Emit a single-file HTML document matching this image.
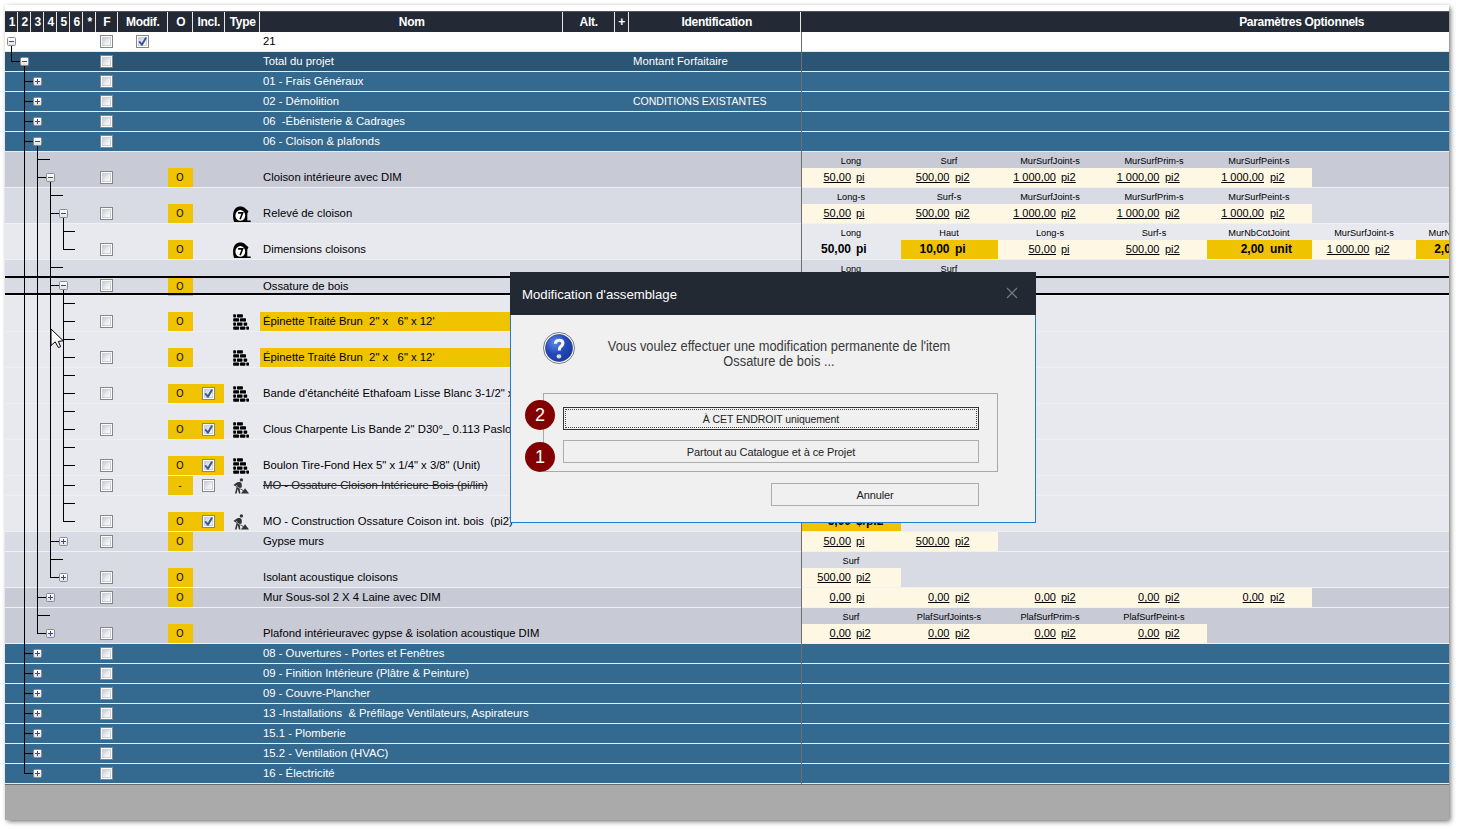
<!DOCTYPE html>
<html><head><meta charset="utf-8"><style>
html,body{margin:0;padding:0;}
body{width:1458px;height:829px;overflow:hidden;position:relative;background:#fff;font-family:"Liberation Sans", sans-serif;}
body div{position:absolute;}
#dlg div{position:absolute;}
.t{white-space:pre;line-height:13px;}
.v{font-size:11px;color:#000;}
.vb{font-size:12px;font-weight:bold;color:#000;}
.lb{font-size:9.2px;color:#000;}
u{text-decoration:underline;text-underline-offset:1px;}
.cb{width:11px;height:11px;border:1px solid #868686;background:#fff;}
.cb::before{content:"";position:absolute;left:1px;top:1px;width:7px;height:7px;border:1px solid #cdd0d7;background:linear-gradient(135deg,#c8ccd5,#eceef1 60%,#f8f8f8);}
.btn{border:1px solid #adadad;background:#f0f0f0;}
.bt{left:0;top:5px;width:100%;text-align:center;font-size:11px;color:#222;letter-spacing:-0.1px;}
.circ{width:30px;height:30px;border-radius:50%;background:#820000;color:#fff;font-size:18px;line-height:30px;text-align:center;}
.eb{width:7px;height:7px;border:1px solid #8c8c8c;border-radius:1.5px;background:linear-gradient(#fff,#e2e2e2);}
.eb .h{left:1px;top:3px;width:5px;height:1px;background:#3548a6;}
.eb .v{left:3px;top:1px;width:1px;height:5px;background:#3548a6;}
</style></head>
<body>
<div id="panel" style="left:5px;top:5px;width:1444px;height:815px;background:#fff;box-shadow:1.5px 1.5px 5px rgba(0,0,0,.55),0 0 3px rgba(0,0,0,.08);"></div>
<div id="clip" style="left:0;top:0;width:1449px;height:820px;overflow:hidden;">
<div style="left:5px;top:11px;width:1444px;height:21px;background:#232a35;box-shadow:inset 0 1px 0 #50555c;"></div><div style="left:17px;top:12px;width:1px;height:20px;background:#e6e6e6;"></div><div style="left:30px;top:12px;width:1px;height:20px;background:#e6e6e6;"></div><div style="left:43px;top:12px;width:1px;height:20px;background:#e6e6e6;"></div><div style="left:56px;top:12px;width:1px;height:20px;background:#e6e6e6;"></div><div style="left:69px;top:12px;width:1px;height:20px;background:#e6e6e6;"></div><div style="left:82px;top:12px;width:1px;height:20px;background:#e6e6e6;"></div><div style="left:95px;top:12px;width:1px;height:20px;background:#e6e6e6;"></div><div style="left:117px;top:12px;width:1px;height:20px;background:#e6e6e6;"></div><div style="left:167px;top:12px;width:1px;height:20px;background:#e6e6e6;"></div><div style="left:192px;top:12px;width:1px;height:20px;background:#e6e6e6;"></div><div style="left:224px;top:12px;width:1px;height:20px;background:#e6e6e6;"></div><div style="left:259px;top:12px;width:1px;height:20px;background:#e6e6e6;"></div><div style="left:562px;top:12px;width:1px;height:20px;background:#e6e6e6;"></div><div style="left:614px;top:12px;width:1px;height:20px;background:#e6e6e6;"></div><div style="left:628px;top:12px;width:1px;height:20px;background:#e6e6e6;"></div><div style="left:800px;top:12px;width:1px;height:20px;background:#e6e6e6;"></div><div class="t" style="left:-288px;width:600px;text-align:center;top:16px;font-size:12px;color:#fff;font-weight:bold;letter-spacing:-0.3px;">1</div><div class="t" style="left:-275.3px;width:600px;text-align:center;top:16px;font-size:12px;color:#fff;font-weight:bold;letter-spacing:-0.3px;">2</div><div class="t" style="left:-262.3px;width:600px;text-align:center;top:16px;font-size:12px;color:#fff;font-weight:bold;letter-spacing:-0.3px;">3</div><div class="t" style="left:-249.3px;width:600px;text-align:center;top:16px;font-size:12px;color:#fff;font-weight:bold;letter-spacing:-0.3px;">4</div><div class="t" style="left:-236.3px;width:600px;text-align:center;top:16px;font-size:12px;color:#fff;font-weight:bold;letter-spacing:-0.3px;">5</div><div class="t" style="left:-223.3px;width:600px;text-align:center;top:16px;font-size:12px;color:#fff;font-weight:bold;letter-spacing:-0.3px;">6</div><div class="t" style="left:-210.3px;width:600px;text-align:center;top:16px;font-size:12px;color:#fff;font-weight:bold;letter-spacing:-0.3px;">*</div><div class="t" style="left:-193.3px;width:600px;text-align:center;top:16px;font-size:12px;color:#fff;font-weight:bold;letter-spacing:-0.3px;">F</div><div class="t" style="left:-157.3px;width:600px;text-align:center;top:16px;font-size:12px;color:#fff;font-weight:bold;letter-spacing:-0.3px;">Modif.</div><div class="t" style="left:-119.30000000000001px;width:600px;text-align:center;top:16px;font-size:12px;color:#fff;font-weight:bold;letter-spacing:-0.3px;">O</div><div class="t" style="left:-91.30000000000001px;width:600px;text-align:center;top:16px;font-size:12px;color:#fff;font-weight:bold;letter-spacing:-0.3px;">Incl.</div><div class="t" style="left:-57.30000000000001px;width:600px;text-align:center;top:16px;font-size:12px;color:#fff;font-weight:bold;letter-spacing:-0.3px;">Type</div><div class="t" style="left:111.69999999999999px;width:600px;text-align:center;top:16px;font-size:12px;color:#fff;font-weight:bold;letter-spacing:-0.3px;">Nom</div><div class="t" style="left:288.70000000000005px;width:600px;text-align:center;top:16px;font-size:12px;color:#fff;font-weight:bold;letter-spacing:-0.3px;">Alt.</div><div class="t" style="left:321.70000000000005px;width:600px;text-align:center;top:16px;font-size:12px;color:#fff;font-weight:bold;letter-spacing:-0.3px;">+</div><div class="t" style="left:416.70000000000005px;width:600px;text-align:center;top:16px;font-size:12px;color:#fff;font-weight:bold;letter-spacing:-0.3px;">Identification</div><div class="t" style="left:1001.7px;width:600px;text-align:center;top:16px;font-size:12px;color:#fff;font-weight:bold;letter-spacing:-0.3px;">Paramètres Optionnels</div><div style="left:5px;top:32px;width:1444px;height:19px;background:#ffffff;"></div><div style="left:5px;top:51px;width:1444px;height:1px;background:#e9e9e9;"></div><div class="cb" style="left:100px;top:35px;"></div><div class="cb" style="left:136px;top:35px;"><svg width="11" height="11" style="position:absolute;left:0;top:0" viewBox="0 0 11 11"><path d="M2.8 6.1 L4.9 8.7 L8.7 2.2" fill="none" stroke="#3a53a0" stroke-width="2" stroke-linecap="round" stroke-linejoin="round"/></svg></div><div class="t" style="left:263px;top:35px;font-size:11.3px;color:#000;font-weight:normal;">21</div><div style="left:5px;top:52px;width:1444px;height:19px;background:#2a5574;"></div><div style="left:5px;top:71px;width:1444px;height:1px;background:#e9ecef;"></div><div class="cb" style="left:100px;top:55px;"></div><div class="t" style="left:263px;top:55px;font-size:11.3px;color:#fff;font-weight:normal;">Total du projet</div><div class="t" style="left:633px;top:55px;font-size:11.3px;color:#fff;font-weight:normal;">Montant Forfaitaire</div><div style="left:5px;top:72px;width:1444px;height:19px;background:#356a90;"></div><div style="left:5px;top:91px;width:1444px;height:1px;background:#e9ecef;"></div><div class="cb" style="left:100px;top:75px;"></div><div class="t" style="left:263px;top:75px;font-size:11.3px;color:#fff;font-weight:normal;">01 - Frais Généraux</div><div style="left:5px;top:92px;width:1444px;height:19px;background:#356a90;"></div><div style="left:5px;top:111px;width:1444px;height:1px;background:#e9ecef;"></div><div class="cb" style="left:100px;top:95px;"></div><div class="t" style="left:263px;top:95px;font-size:11.3px;color:#fff;font-weight:normal;">02 - Démolition</div><div class="t" style="left:633px;top:95px;font-size:10.5px;color:#fff;font-weight:normal;">CONDITIONS EXISTANTES</div><div style="left:5px;top:112px;width:1444px;height:19px;background:#356a90;"></div><div style="left:5px;top:131px;width:1444px;height:1px;background:#e9ecef;"></div><div class="cb" style="left:100px;top:115px;"></div><div class="t" style="left:263px;top:115px;font-size:11.3px;color:#fff;font-weight:normal;">06  -Ébénisterie &amp; Cadrages</div><div style="left:5px;top:132px;width:1444px;height:19px;background:#356a90;"></div><div style="left:5px;top:151px;width:1444px;height:1px;background:#e9ecef;"></div><div class="cb" style="left:100px;top:135px;"></div><div class="t" style="left:263px;top:135px;font-size:11.3px;color:#fff;font-weight:normal;">06 - Cloison &amp; plafonds</div><div style="left:5px;top:152px;width:1444px;height:35px;background:#c8cad6;"></div><div style="left:5px;top:187px;width:1444px;height:1px;background:#f0f1f4;"></div><div class="cb" style="left:100px;top:171px;"></div><div style="left:168px;top:168px;width:25px;height:19px;background:#f0c300;"></div><div class="t" style="left:-120.5px;width:600px;text-align:center;top:171px;font-size:11px;color:#000;font-weight:normal;transform:scaleX(0.85);">O</div><div class="t" style="left:263px;top:171px;font-size:11.3px;color:#000;font-weight:normal;">Cloison intérieure avec DIM</div><div style="left:5px;top:188px;width:1444px;height:35px;background:#d8dbe4;"></div><div style="left:5px;top:223px;width:1444px;height:1px;background:#f0f1f4;"></div><div class="cb" style="left:100px;top:207px;"></div><div style="left:168px;top:204px;width:25px;height:19px;background:#f0c300;"></div><div class="t" style="left:-120.5px;width:600px;text-align:center;top:207px;font-size:11px;color:#000;font-weight:normal;transform:scaleX(0.85);">O</div><div class="ic tape" style="left:233px;top:206px;"><svg width="18" height="16" viewBox="0 0 18 16"><path d="M1.2 15.9 C-0.5 12.5 -0.5 5 2.6 2.2 C4.6 0.3 9.4 -0.4 12.4 2.4 L15.5 5.3 L14.3 7.4 L14.3 14.4 L17.7 14.4 L17.7 15.9 Z" fill="#000"/><ellipse cx="7.3" cy="9.4" rx="4.9" ry="5.3" fill="#fff"/><path d="M5.1 6.9 L9.6 6.9 L7.1 13.3" stroke="#000" stroke-width="1.6" fill="none"/></svg></div><div class="t" style="left:263px;top:207px;font-size:11.3px;color:#000;font-weight:normal;">Relevé de cloison</div><div style="left:5px;top:224px;width:1444px;height:35px;background:#e8e9ef;"></div><div style="left:5px;top:259px;width:1444px;height:1px;background:#eeeff3;"></div><div class="cb" style="left:100px;top:243px;"></div><div style="left:168px;top:240px;width:25px;height:19px;background:#f0c300;"></div><div class="t" style="left:-120.5px;width:600px;text-align:center;top:243px;font-size:11px;color:#000;font-weight:normal;transform:scaleX(0.85);">O</div><div class="ic tape" style="left:233px;top:242px;"><svg width="18" height="16" viewBox="0 0 18 16"><path d="M1.2 15.9 C-0.5 12.5 -0.5 5 2.6 2.2 C4.6 0.3 9.4 -0.4 12.4 2.4 L15.5 5.3 L14.3 7.4 L14.3 14.4 L17.7 14.4 L17.7 15.9 Z" fill="#000"/><ellipse cx="7.3" cy="9.4" rx="4.9" ry="5.3" fill="#fff"/><path d="M5.1 6.9 L9.6 6.9 L7.1 13.3" stroke="#000" stroke-width="1.6" fill="none"/></svg></div><div class="t" style="left:263px;top:243px;font-size:11.3px;color:#000;font-weight:normal;">Dimensions cloisons</div><div style="left:5px;top:260px;width:1444px;height:35px;background:#d8dbe4;"></div><div style="left:5px;top:295px;width:1444px;height:1px;background:#f0f1f4;"></div><div class="cb" style="left:100px;top:279px;"></div><div style="left:168px;top:278px;width:25px;height:18px;background:#f0c300;"></div><div class="t" style="left:-120.5px;width:600px;text-align:center;top:280px;font-size:11px;color:#000;font-weight:normal;transform:scaleX(0.85);">O</div><div class="t" style="left:263px;top:280px;font-size:11.3px;color:#000;font-weight:normal;">Ossature de bois</div><div style="left:5px;top:296px;width:1444px;height:35px;background:#e8e9ef;"></div><div style="left:5px;top:331px;width:1444px;height:1px;background:#eeeff3;"></div><div class="cb" style="left:100px;top:315px;"></div><div style="left:168px;top:312px;width:25px;height:19px;background:#f0c300;"></div><div class="t" style="left:-120.5px;width:600px;text-align:center;top:315px;font-size:11px;color:#000;font-weight:normal;transform:scaleX(0.85);">O</div><div style="left:260px;top:312px;width:302px;height:19px;background:#f0c300;"></div><div class="ic brick" style="left:233px;top:314px;"><svg width="16" height="16" viewBox="0 0 16 16"><g fill="#000"><rect x="0.2" y="0.2" width="2.8" height="3.3" rx="0.7"/><rect x="3.9" y="0.2" width="6" height="3.3" rx="0.7"/><rect x="0.2" y="4.3" width="5.9" height="3.3" rx="0.7"/><rect x="7" y="4.3" width="6" height="3.3" rx="0.7"/><rect x="0.2" y="8.4" width="2.8" height="3.3" rx="0.7"/><rect x="3.9" y="8.4" width="5.6" height="3.3" rx="0.7"/><rect x="10.6" y="8.4" width="3.6" height="3.3" rx="0.7"/><rect x="0.2" y="12.5" width="5.9" height="3.3" rx="0.7"/><rect x="7" y="12.5" width="5.4" height="3.3" rx="0.7"/><rect x="13.3" y="12.5" width="2.7" height="3.3" rx="0.7"/></g></svg></div><div class="t" style="left:263px;top:315px;font-size:11.3px;color:#000;font-weight:normal;">Épinette Traité Brun  2&quot; x   6&quot; x 12&#x27;</div><div style="left:5px;top:332px;width:1444px;height:35px;background:#e8e9ef;"></div><div style="left:5px;top:367px;width:1444px;height:1px;background:#eeeff3;"></div><div class="cb" style="left:100px;top:351px;"></div><div style="left:168px;top:348px;width:25px;height:19px;background:#f0c300;"></div><div class="t" style="left:-120.5px;width:600px;text-align:center;top:351px;font-size:11px;color:#000;font-weight:normal;transform:scaleX(0.85);">O</div><div style="left:260px;top:348px;width:302px;height:19px;background:#f0c300;"></div><div class="ic brick" style="left:233px;top:350px;"><svg width="16" height="16" viewBox="0 0 16 16"><g fill="#000"><rect x="0.2" y="0.2" width="2.8" height="3.3" rx="0.7"/><rect x="3.9" y="0.2" width="6" height="3.3" rx="0.7"/><rect x="0.2" y="4.3" width="5.9" height="3.3" rx="0.7"/><rect x="7" y="4.3" width="6" height="3.3" rx="0.7"/><rect x="0.2" y="8.4" width="2.8" height="3.3" rx="0.7"/><rect x="3.9" y="8.4" width="5.6" height="3.3" rx="0.7"/><rect x="10.6" y="8.4" width="3.6" height="3.3" rx="0.7"/><rect x="0.2" y="12.5" width="5.9" height="3.3" rx="0.7"/><rect x="7" y="12.5" width="5.4" height="3.3" rx="0.7"/><rect x="13.3" y="12.5" width="2.7" height="3.3" rx="0.7"/></g></svg></div><div class="t" style="left:263px;top:351px;font-size:11.3px;color:#000;font-weight:normal;">Épinette Traité Brun  2&quot; x   6&quot; x 12&#x27;</div><div style="left:5px;top:368px;width:1444px;height:35px;background:#e8e9ef;"></div><div style="left:5px;top:403px;width:1444px;height:1px;background:#eeeff3;"></div><div class="cb" style="left:100px;top:387px;"></div><div style="left:168px;top:384px;width:56px;height:19px;background:#f0c300;"></div><div class="t" style="left:-120.5px;width:600px;text-align:center;top:387px;font-size:11px;color:#000;font-weight:normal;transform:scaleX(0.85);">O</div><div class="cb" style="left:202px;top:387px;"><svg width="11" height="11" style="position:absolute;left:0;top:0" viewBox="0 0 11 11"><path d="M2.8 6.1 L4.9 8.7 L8.7 2.2" fill="none" stroke="#3a53a0" stroke-width="2" stroke-linecap="round" stroke-linejoin="round"/></svg></div><div class="ic brick" style="left:233px;top:386px;"><svg width="16" height="16" viewBox="0 0 16 16"><g fill="#000"><rect x="0.2" y="0.2" width="2.8" height="3.3" rx="0.7"/><rect x="3.9" y="0.2" width="6" height="3.3" rx="0.7"/><rect x="0.2" y="4.3" width="5.9" height="3.3" rx="0.7"/><rect x="7" y="4.3" width="6" height="3.3" rx="0.7"/><rect x="0.2" y="8.4" width="2.8" height="3.3" rx="0.7"/><rect x="3.9" y="8.4" width="5.6" height="3.3" rx="0.7"/><rect x="10.6" y="8.4" width="3.6" height="3.3" rx="0.7"/><rect x="0.2" y="12.5" width="5.9" height="3.3" rx="0.7"/><rect x="7" y="12.5" width="5.4" height="3.3" rx="0.7"/><rect x="13.3" y="12.5" width="2.7" height="3.3" rx="0.7"/></g></svg></div><div class="t" style="left:263px;top:387px;font-size:11.3px;color:#000;font-weight:normal;">Bande d&#x27;étanchéité Ethafoam Lisse Blanc 3-1/2&quot; x 1/4&quot; x 50&#x27;</div><div style="left:5px;top:404px;width:1444px;height:35px;background:#e8e9ef;"></div><div style="left:5px;top:439px;width:1444px;height:1px;background:#eeeff3;"></div><div class="cb" style="left:100px;top:423px;"></div><div style="left:168px;top:420px;width:56px;height:19px;background:#f0c300;"></div><div class="t" style="left:-120.5px;width:600px;text-align:center;top:423px;font-size:11px;color:#000;font-weight:normal;transform:scaleX(0.85);">O</div><div class="cb" style="left:202px;top:423px;"><svg width="11" height="11" style="position:absolute;left:0;top:0" viewBox="0 0 11 11"><path d="M2.8 6.1 L4.9 8.7 L8.7 2.2" fill="none" stroke="#3a53a0" stroke-width="2" stroke-linecap="round" stroke-linejoin="round"/></svg></div><div class="ic brick" style="left:233px;top:422px;"><svg width="16" height="16" viewBox="0 0 16 16"><g fill="#000"><rect x="0.2" y="0.2" width="2.8" height="3.3" rx="0.7"/><rect x="3.9" y="0.2" width="6" height="3.3" rx="0.7"/><rect x="0.2" y="4.3" width="5.9" height="3.3" rx="0.7"/><rect x="7" y="4.3" width="6" height="3.3" rx="0.7"/><rect x="0.2" y="8.4" width="2.8" height="3.3" rx="0.7"/><rect x="3.9" y="8.4" width="5.6" height="3.3" rx="0.7"/><rect x="10.6" y="8.4" width="3.6" height="3.3" rx="0.7"/><rect x="0.2" y="12.5" width="5.9" height="3.3" rx="0.7"/><rect x="7" y="12.5" width="5.4" height="3.3" rx="0.7"/><rect x="13.3" y="12.5" width="2.7" height="3.3" rx="0.7"/></g></svg></div><div class="t" style="left:263px;top:423px;font-size:11.3px;color:#000;font-weight:normal;">Clous Charpente Lis Bande 2&quot; D30°_ 0.113 Paslode</div><div style="left:5px;top:440px;width:1444px;height:35px;background:#e8e9ef;"></div><div style="left:5px;top:475px;width:1444px;height:1px;background:#eeeff3;"></div><div class="cb" style="left:100px;top:459px;"></div><div style="left:168px;top:456px;width:56px;height:19px;background:#f0c300;"></div><div class="t" style="left:-120.5px;width:600px;text-align:center;top:459px;font-size:11px;color:#000;font-weight:normal;transform:scaleX(0.85);">O</div><div class="cb" style="left:202px;top:459px;"><svg width="11" height="11" style="position:absolute;left:0;top:0" viewBox="0 0 11 11"><path d="M2.8 6.1 L4.9 8.7 L8.7 2.2" fill="none" stroke="#3a53a0" stroke-width="2" stroke-linecap="round" stroke-linejoin="round"/></svg></div><div class="ic brick" style="left:233px;top:458px;"><svg width="16" height="16" viewBox="0 0 16 16"><g fill="#000"><rect x="0.2" y="0.2" width="2.8" height="3.3" rx="0.7"/><rect x="3.9" y="0.2" width="6" height="3.3" rx="0.7"/><rect x="0.2" y="4.3" width="5.9" height="3.3" rx="0.7"/><rect x="7" y="4.3" width="6" height="3.3" rx="0.7"/><rect x="0.2" y="8.4" width="2.8" height="3.3" rx="0.7"/><rect x="3.9" y="8.4" width="5.6" height="3.3" rx="0.7"/><rect x="10.6" y="8.4" width="3.6" height="3.3" rx="0.7"/><rect x="0.2" y="12.5" width="5.9" height="3.3" rx="0.7"/><rect x="7" y="12.5" width="5.4" height="3.3" rx="0.7"/><rect x="13.3" y="12.5" width="2.7" height="3.3" rx="0.7"/></g></svg></div><div class="t" style="left:263px;top:459px;font-size:11.3px;color:#000;font-weight:normal;">Boulon Tire-Fond Hex 5&quot; x 1/4&quot; x 3/8&quot; (Unit)</div><div style="left:5px;top:476px;width:1444px;height:19px;background:#e8e9ef;"></div><div style="left:5px;top:495px;width:1444px;height:1px;background:#eeeff3;"></div><div class="cb" style="left:100px;top:479px;"></div><div style="left:168px;top:476px;width:25px;height:19px;background:#f0c300;"></div><div class="t" style="left:-120.5px;width:600px;text-align:center;top:479px;font-size:11px;color:#000;font-weight:normal;transform:scaleX(0.85);">-</div><div class="cb" style="left:202px;top:479px;"></div><div class="ic worker" style="left:233px;top:478px;"><svg width="16" height="16" viewBox="0 0 16 16"><g fill="#333"><circle cx="8.4" cy="1.9" r="1.7"/><path d="M3.2 5 C4.2 4 6 3.8 7.4 4.3 C8.6 4.8 8.9 6.2 8.8 7.4 L8.6 9.6 L6.6 10 L7.4 15.6 L5.9 15.6 L4.8 10.8 L3.6 15.6 L1.9 15.6 L3.6 9 L4.4 6.8 L2.6 8 L0.4 6.9 Z"/><path d="M1.6 7.2 L10.6 12.8" stroke="#333" stroke-width="0.9"/><path d="M3.6 8.4 L8.2 11.3" stroke="#e8e9ef" stroke-width="0.6"/><path d="M7.9 15.6 L16 15.6 L12.1 10.2 Z"/></g></svg></div><div class="t" style="left:263px;top:479px;font-size:11.3px;color:#000;font-weight:normal;text-decoration:line-through;color:#222;">MO - Ossature Cloison Intérieure Bois (pi/lin)</div><div style="left:5px;top:496px;width:1444px;height:35px;background:#e8e9ef;"></div><div style="left:5px;top:531px;width:1444px;height:1px;background:#eeeff3;"></div><div class="cb" style="left:100px;top:515px;"></div><div style="left:168px;top:512px;width:56px;height:19px;background:#f0c300;"></div><div class="t" style="left:-120.5px;width:600px;text-align:center;top:515px;font-size:11px;color:#000;font-weight:normal;transform:scaleX(0.85);">O</div><div class="cb" style="left:202px;top:515px;"><svg width="11" height="11" style="position:absolute;left:0;top:0" viewBox="0 0 11 11"><path d="M2.8 6.1 L4.9 8.7 L8.7 2.2" fill="none" stroke="#3a53a0" stroke-width="2" stroke-linecap="round" stroke-linejoin="round"/></svg></div><div class="ic worker" style="left:233px;top:514px;"><svg width="16" height="16" viewBox="0 0 16 16"><g fill="#333"><circle cx="8.4" cy="1.9" r="1.7"/><path d="M3.2 5 C4.2 4 6 3.8 7.4 4.3 C8.6 4.8 8.9 6.2 8.8 7.4 L8.6 9.6 L6.6 10 L7.4 15.6 L5.9 15.6 L4.8 10.8 L3.6 15.6 L1.9 15.6 L3.6 9 L4.4 6.8 L2.6 8 L0.4 6.9 Z"/><path d="M1.6 7.2 L10.6 12.8" stroke="#333" stroke-width="0.9"/><path d="M3.6 8.4 L8.2 11.3" stroke="#e8e9ef" stroke-width="0.6"/><path d="M7.9 15.6 L16 15.6 L12.1 10.2 Z"/></g></svg></div><div class="t" style="left:263px;top:515px;font-size:11.3px;color:#000;font-weight:normal;">MO - Construction Ossature Coison int. bois  (pi2)</div><div style="left:5px;top:532px;width:1444px;height:19px;background:#d8dbe4;"></div><div style="left:5px;top:551px;width:1444px;height:1px;background:#f0f1f4;"></div><div class="cb" style="left:100px;top:535px;"></div><div style="left:168px;top:532px;width:25px;height:19px;background:#f0c300;"></div><div class="t" style="left:-120.5px;width:600px;text-align:center;top:535px;font-size:11px;color:#000;font-weight:normal;transform:scaleX(0.85);">O</div><div class="t" style="left:263px;top:535px;font-size:11.3px;color:#000;font-weight:normal;">Gypse murs</div><div style="left:5px;top:552px;width:1444px;height:35px;background:#d8dbe4;"></div><div style="left:5px;top:587px;width:1444px;height:1px;background:#f0f1f4;"></div><div class="cb" style="left:100px;top:571px;"></div><div style="left:168px;top:568px;width:25px;height:19px;background:#f0c300;"></div><div class="t" style="left:-120.5px;width:600px;text-align:center;top:571px;font-size:11px;color:#000;font-weight:normal;transform:scaleX(0.85);">O</div><div class="t" style="left:263px;top:571px;font-size:11.3px;color:#000;font-weight:normal;">Isolant acoustique cloisons</div><div style="left:5px;top:588px;width:1444px;height:19px;background:#c8cad6;"></div><div style="left:5px;top:607px;width:1444px;height:1px;background:#f0f1f4;"></div><div class="cb" style="left:100px;top:591px;"></div><div style="left:168px;top:588px;width:25px;height:19px;background:#f0c300;"></div><div class="t" style="left:-120.5px;width:600px;text-align:center;top:591px;font-size:11px;color:#000;font-weight:normal;transform:scaleX(0.85);">O</div><div class="t" style="left:263px;top:591px;font-size:11.3px;color:#000;font-weight:normal;">Mur Sous-sol 2 X 4 Laine avec DIM</div><div style="left:5px;top:608px;width:1444px;height:35px;background:#c8cad6;"></div><div style="left:5px;top:643px;width:1444px;height:1px;background:#f0f1f4;"></div><div class="cb" style="left:100px;top:627px;"></div><div style="left:168px;top:624px;width:25px;height:19px;background:#f0c300;"></div><div class="t" style="left:-120.5px;width:600px;text-align:center;top:627px;font-size:11px;color:#000;font-weight:normal;transform:scaleX(0.85);">O</div><div class="t" style="left:263px;top:627px;font-size:11.3px;color:#000;font-weight:normal;">Plafond intérieuravec gypse &amp; isolation acoustique DIM</div><div style="left:5px;top:644px;width:1444px;height:19px;background:#356a90;"></div><div style="left:5px;top:663px;width:1444px;height:1px;background:#e9ecef;"></div><div class="cb" style="left:100px;top:647px;"></div><div class="t" style="left:263px;top:647px;font-size:11.3px;color:#fff;font-weight:normal;">08 - Ouvertures - Portes et Fenêtres</div><div style="left:5px;top:664px;width:1444px;height:19px;background:#356a90;"></div><div style="left:5px;top:683px;width:1444px;height:1px;background:#e9ecef;"></div><div class="cb" style="left:100px;top:667px;"></div><div class="t" style="left:263px;top:667px;font-size:11.3px;color:#fff;font-weight:normal;">09 - Finition Intérieure (Plâtre &amp; Peinture)</div><div style="left:5px;top:684px;width:1444px;height:19px;background:#356a90;"></div><div style="left:5px;top:703px;width:1444px;height:1px;background:#e9ecef;"></div><div class="cb" style="left:100px;top:687px;"></div><div class="t" style="left:263px;top:687px;font-size:11.3px;color:#fff;font-weight:normal;">09 - Couvre-Plancher</div><div style="left:5px;top:704px;width:1444px;height:19px;background:#356a90;"></div><div style="left:5px;top:723px;width:1444px;height:1px;background:#e9ecef;"></div><div class="cb" style="left:100px;top:707px;"></div><div class="t" style="left:263px;top:707px;font-size:11.3px;color:#fff;font-weight:normal;">13 -Installations  &amp; Préfilage Ventilateurs, Aspirateurs</div><div style="left:5px;top:724px;width:1444px;height:19px;background:#356a90;"></div><div style="left:5px;top:743px;width:1444px;height:1px;background:#e9ecef;"></div><div class="cb" style="left:100px;top:727px;"></div><div class="t" style="left:263px;top:727px;font-size:11.3px;color:#fff;font-weight:normal;">15.1 - Plomberie</div><div style="left:5px;top:744px;width:1444px;height:19px;background:#356a90;"></div><div style="left:5px;top:763px;width:1444px;height:1px;background:#e9ecef;"></div><div class="cb" style="left:100px;top:747px;"></div><div class="t" style="left:263px;top:747px;font-size:11.3px;color:#fff;font-weight:normal;">15.2 - Ventilation (HVAC)</div><div style="left:5px;top:764px;width:1444px;height:19px;background:#356a90;"></div><div style="left:5px;top:783px;width:1444px;height:1px;background:#e9ecef;"></div><div class="cb" style="left:100px;top:767px;"></div><div class="t" style="left:263px;top:767px;font-size:11.3px;color:#fff;font-weight:normal;">16 - Électricité</div><div style="left:801px;top:32px;width:1px;height:752px;background:#6e6e6e;"></div><div class="t lb" style="left:751px;width:200px;text-align:center;top:155px;">Long</div><div class="t lb" style="left:849px;width:200px;text-align:center;top:155px;">Surf</div><div class="t lb" style="left:950px;width:200px;text-align:center;top:155px;">MurSurfJoint-s</div><div class="t lb" style="left:1054px;width:200px;text-align:center;top:155px;">MurSurfPrim-s</div><div class="t lb" style="left:1159px;width:200px;text-align:center;top:155px;">MurSurfPeint-s</div><div style="left:802px;top:168px;width:99px;height:19px;background:#fdf7e4;"></div><div class="t v" style="left:751px;width:100px;text-align:right;top:171px;"><u>50,00</u></div><div class="t v" style="left:856px;top:171px;"><u>pi</u></div><div style="left:901px;top:168px;width:97px;height:19px;background:#fdf7e4;"></div><div class="t v" style="left:849.5px;width:100px;text-align:right;top:171px;"><u>500,00</u></div><div class="t v" style="left:955px;top:171px;"><u>pi2</u></div><div style="left:998px;top:168px;width:104px;height:19px;background:#fdf7e4;"></div><div class="t v" style="left:956px;width:100px;text-align:right;top:171px;"><u>1 000,00</u></div><div class="t v" style="left:1061px;top:171px;"><u>pi2</u></div><div style="left:1102px;top:168px;width:105px;height:19px;background:#fdf7e4;"></div><div class="t v" style="left:1059.5px;width:100px;text-align:right;top:171px;"><u>1 000,00</u></div><div class="t v" style="left:1165px;top:171px;"><u>pi2</u></div><div style="left:1207px;top:168px;width:105px;height:19px;background:#fdf7e4;"></div><div class="t v" style="left:1164px;width:100px;text-align:right;top:171px;"><u>1 000,00</u></div><div class="t v" style="left:1270px;top:171px;"><u>pi2</u></div><div class="t lb" style="left:751px;width:200px;text-align:center;top:191px;">Long-s</div><div class="t lb" style="left:849px;width:200px;text-align:center;top:191px;">Surf-s</div><div class="t lb" style="left:950px;width:200px;text-align:center;top:191px;">MurSurfJoint-s</div><div class="t lb" style="left:1054px;width:200px;text-align:center;top:191px;">MurSurfPrim-s</div><div class="t lb" style="left:1159px;width:200px;text-align:center;top:191px;">MurSurfPeint-s</div><div style="left:802px;top:204px;width:99px;height:19px;background:#fdf7e4;"></div><div class="t v" style="left:751px;width:100px;text-align:right;top:207px;"><u>50,00</u></div><div class="t v" style="left:856px;top:207px;"><u>pi</u></div><div style="left:901px;top:204px;width:97px;height:19px;background:#fdf7e4;"></div><div class="t v" style="left:849.5px;width:100px;text-align:right;top:207px;"><u>500,00</u></div><div class="t v" style="left:955px;top:207px;"><u>pi2</u></div><div style="left:998px;top:204px;width:104px;height:19px;background:#fdf7e4;"></div><div class="t v" style="left:956px;width:100px;text-align:right;top:207px;"><u>1 000,00</u></div><div class="t v" style="left:1061px;top:207px;"><u>pi2</u></div><div style="left:1102px;top:204px;width:105px;height:19px;background:#fdf7e4;"></div><div class="t v" style="left:1059.5px;width:100px;text-align:right;top:207px;"><u>1 000,00</u></div><div class="t v" style="left:1165px;top:207px;"><u>pi2</u></div><div style="left:1207px;top:204px;width:105px;height:19px;background:#fdf7e4;"></div><div class="t v" style="left:1164px;width:100px;text-align:right;top:207px;"><u>1 000,00</u></div><div class="t v" style="left:1270px;top:207px;"><u>pi2</u></div><div class="t lb" style="left:751px;width:200px;text-align:center;top:227px;">Long</div><div class="t lb" style="left:849px;width:200px;text-align:center;top:227px;">Haut</div><div class="t lb" style="left:950px;width:200px;text-align:center;top:227px;">Long-s</div><div class="t lb" style="left:1054px;width:200px;text-align:center;top:227px;">Surf-s</div><div class="t lb" style="left:1159px;width:200px;text-align:center;top:227px;">MurNbCotJoint</div><div class="t lb" style="left:1264px;width:200px;text-align:center;top:227px;">MurSurfJoint-s</div><div class="t lb" style="left:1360px;width:200px;text-align:center;top:227px;">MurNbCotPeint</div><div class="t vb" style="left:751px;width:100px;text-align:right;top:243px;">50,00</div><div class="t vb" style="left:856px;top:243px;">pi</div><div style="left:901px;top:240px;width:97px;height:19px;background:#f0c300;"></div><div class="t vb" style="left:849.5px;width:100px;text-align:right;top:243px;">10,00</div><div class="t vb" style="left:955px;top:243px;">pi</div><div style="left:998px;top:240px;width:104px;height:19px;background:#fdf7e4;"></div><div class="t v" style="left:956px;width:100px;text-align:right;top:243px;"><u>50,00</u></div><div class="t v" style="left:1061px;top:243px;"><u>pi</u></div><div style="left:1102px;top:240px;width:105px;height:19px;background:#fdf7e4;"></div><div class="t v" style="left:1059.5px;width:100px;text-align:right;top:243px;"><u>500,00</u></div><div class="t v" style="left:1165px;top:243px;"><u>pi2</u></div><div style="left:1207px;top:240px;width:105px;height:19px;background:#f0c300;"></div><div class="t vb" style="left:1164px;width:100px;text-align:right;top:243px;">2,00</div><div class="t vb" style="left:1270px;top:243px;">unit</div><div style="left:1312px;top:240px;width:104px;height:19px;background:#fdf7e4;"></div><div class="t v" style="left:1269.5px;width:100px;text-align:right;top:243px;"><u>1 000,00</u></div><div class="t v" style="left:1375px;top:243px;"><u>pi2</u></div><div style="left:1416px;top:240px;width:104px;height:19px;background:#f0c300;"></div><div class="t vb" style="left:1357.5px;width:100px;text-align:right;top:243px;">2,00</div><div class="t vb" style="left:1463px;top:243px;">unit</div><div class="t lb" style="left:751px;width:200px;text-align:center;top:263px;">Long</div><div class="t lb" style="left:849px;width:200px;text-align:center;top:263px;">Surf</div><div style="left:802px;top:512px;width:99px;height:19px;background:#f0c300;"></div><div class="t vb" style="left:751px;width:100px;text-align:right;top:515px;">5,00</div><div class="t vb" style="left:856px;top:515px;">$/pi2</div><div style="left:802px;top:532px;width:99px;height:19px;background:#fdf7e4;"></div><div class="t v" style="left:751px;width:100px;text-align:right;top:535px;"><u>50,00</u></div><div class="t v" style="left:856px;top:535px;"><u>pi</u></div><div style="left:901px;top:532px;width:97px;height:19px;background:#fdf7e4;"></div><div class="t v" style="left:849.5px;width:100px;text-align:right;top:535px;"><u>500,00</u></div><div class="t v" style="left:955px;top:535px;"><u>pi2</u></div><div class="t lb" style="left:751px;width:200px;text-align:center;top:555px;">Surf</div><div style="left:802px;top:568px;width:99px;height:19px;background:#fdf7e4;"></div><div class="t v" style="left:751px;width:100px;text-align:right;top:571px;"><u>500,00</u></div><div class="t v" style="left:856px;top:571px;"><u>pi2</u></div><div style="left:802px;top:588px;width:99px;height:19px;background:#fdf7e4;"></div><div class="t v" style="left:751px;width:100px;text-align:right;top:591px;"><u>0,00</u></div><div class="t v" style="left:856px;top:591px;"><u>pi</u></div><div style="left:901px;top:588px;width:97px;height:19px;background:#fdf7e4;"></div><div class="t v" style="left:849.5px;width:100px;text-align:right;top:591px;"><u>0,00</u></div><div class="t v" style="left:955px;top:591px;"><u>pi2</u></div><div style="left:998px;top:588px;width:104px;height:19px;background:#fdf7e4;"></div><div class="t v" style="left:956px;width:100px;text-align:right;top:591px;"><u>0,00</u></div><div class="t v" style="left:1061px;top:591px;"><u>pi2</u></div><div style="left:1102px;top:588px;width:105px;height:19px;background:#fdf7e4;"></div><div class="t v" style="left:1059.5px;width:100px;text-align:right;top:591px;"><u>0,00</u></div><div class="t v" style="left:1165px;top:591px;"><u>pi2</u></div><div style="left:1207px;top:588px;width:105px;height:19px;background:#fdf7e4;"></div><div class="t v" style="left:1164px;width:100px;text-align:right;top:591px;"><u>0,00</u></div><div class="t v" style="left:1270px;top:591px;"><u>pi2</u></div><div class="t lb" style="left:751px;width:200px;text-align:center;top:611px;">Surf</div><div class="t lb" style="left:849px;width:200px;text-align:center;top:611px;">PlafSurfJoints-s</div><div class="t lb" style="left:950px;width:200px;text-align:center;top:611px;">PlafSurfPrim-s</div><div class="t lb" style="left:1054px;width:200px;text-align:center;top:611px;">PlafSurfPeint-s</div><div style="left:802px;top:624px;width:99px;height:19px;background:#fdf7e4;"></div><div class="t v" style="left:751px;width:100px;text-align:right;top:627px;"><u>0,00</u></div><div class="t v" style="left:856px;top:627px;"><u>pi2</u></div><div style="left:901px;top:624px;width:97px;height:19px;background:#fdf7e4;"></div><div class="t v" style="left:849.5px;width:100px;text-align:right;top:627px;"><u>0,00</u></div><div class="t v" style="left:955px;top:627px;"><u>pi2</u></div><div style="left:998px;top:624px;width:104px;height:19px;background:#fdf7e4;"></div><div class="t v" style="left:956px;width:100px;text-align:right;top:627px;"><u>0,00</u></div><div class="t v" style="left:1061px;top:627px;"><u>pi2</u></div><div style="left:1102px;top:624px;width:105px;height:19px;background:#fdf7e4;"></div><div class="t v" style="left:1059.5px;width:100px;text-align:right;top:627px;"><u>0,00</u></div><div class="t v" style="left:1165px;top:627px;"><u>pi2</u></div><div style="left:5px;top:276px;width:1444px;height:2px;background:#000;"></div><div style="left:5px;top:293px;width:1444px;height:2px;background:#000;"></div><div style="left:11px;top:45px;width:1px;height:17px;background:#000;"></div><div style="left:11px;top:61px;width:9px;height:1px;background:#000;"></div><div style="left:24px;top:66px;width:1px;height:708px;background:#000;"></div><div style="left:24px;top:81px;width:9px;height:1px;background:#000;"></div><div style="left:24px;top:101px;width:9px;height:1px;background:#000;"></div><div style="left:24px;top:121px;width:9px;height:1px;background:#000;"></div><div style="left:24px;top:141px;width:9px;height:1px;background:#000;"></div><div style="left:24px;top:653px;width:9px;height:1px;background:#000;"></div><div style="left:24px;top:673px;width:9px;height:1px;background:#000;"></div><div style="left:24px;top:693px;width:9px;height:1px;background:#000;"></div><div style="left:24px;top:713px;width:9px;height:1px;background:#000;"></div><div style="left:24px;top:733px;width:9px;height:1px;background:#000;"></div><div style="left:24px;top:753px;width:9px;height:1px;background:#000;"></div><div style="left:24px;top:773px;width:9px;height:1px;background:#000;"></div><div style="left:37px;top:146px;width:1px;height:488px;background:#000;"></div><div style="left:37px;top:159px;width:13px;height:1px;background:#000;"></div><div style="left:37px;top:177px;width:9px;height:1px;background:#000;"></div><div style="left:50px;top:182px;width:1px;height:396px;background:#000;"></div><div style="left:50px;top:195px;width:13px;height:1px;background:#000;"></div><div style="left:50px;top:213px;width:9px;height:1px;background:#000;"></div><div style="left:63px;top:218px;width:1px;height:32px;background:#000;"></div><div style="left:63px;top:231px;width:12px;height:1px;background:#000;"></div><div style="left:63px;top:249px;width:12px;height:1px;background:#000;"></div><div style="left:50px;top:267px;width:13px;height:1px;background:#000;"></div><div style="left:50px;top:285px;width:9px;height:1px;background:#000;"></div><div style="left:63px;top:290px;width:1px;height:232px;background:#000;"></div><div style="left:63px;top:303px;width:12px;height:1px;background:#000;"></div><div style="left:63px;top:321px;width:12px;height:1px;background:#000;"></div><div style="left:63px;top:339px;width:12px;height:1px;background:#000;"></div><div style="left:63px;top:357px;width:12px;height:1px;background:#000;"></div><div style="left:63px;top:375px;width:12px;height:1px;background:#000;"></div><div style="left:63px;top:393px;width:12px;height:1px;background:#000;"></div><div style="left:63px;top:411px;width:12px;height:1px;background:#000;"></div><div style="left:63px;top:429px;width:12px;height:1px;background:#000;"></div><div style="left:63px;top:447px;width:12px;height:1px;background:#000;"></div><div style="left:63px;top:465px;width:12px;height:1px;background:#000;"></div><div style="left:63px;top:503px;width:12px;height:1px;background:#000;"></div><div style="left:63px;top:521px;width:12px;height:1px;background:#000;"></div><div style="left:63px;top:485px;width:12px;height:1px;background:#000;"></div><div style="left:50px;top:541px;width:9px;height:1px;background:#000;"></div><div style="left:50px;top:559px;width:13px;height:1px;background:#000;"></div><div style="left:50px;top:577px;width:9px;height:1px;background:#000;"></div><div style="left:37px;top:597px;width:9px;height:1px;background:#000;"></div><div style="left:37px;top:615px;width:13px;height:1px;background:#000;"></div><div style="left:37px;top:633px;width:9px;height:1px;background:#000;"></div><div class="eb" style="left:7px;top:37px;"><div class="h"></div></div><div class="eb" style="left:20px;top:57px;"><div class="h"></div></div><div class="eb" style="left:33px;top:77px;"><div class="h"></div><div class="v"></div></div><div class="eb" style="left:33px;top:97px;"><div class="h"></div><div class="v"></div></div><div class="eb" style="left:33px;top:117px;"><div class="h"></div><div class="v"></div></div><div class="eb" style="left:33px;top:137px;"><div class="h"></div></div><div class="eb" style="left:46px;top:173px;"><div class="h"></div></div><div class="eb" style="left:59px;top:209px;"><div class="h"></div></div><div class="eb" style="left:59px;top:281px;"><div class="h"></div></div><div class="eb" style="left:59px;top:537px;"><div class="h"></div><div class="v"></div></div><div class="eb" style="left:59px;top:573px;"><div class="h"></div><div class="v"></div></div><div class="eb" style="left:46px;top:593px;"><div class="h"></div><div class="v"></div></div><div class="eb" style="left:46px;top:629px;"><div class="h"></div><div class="v"></div></div><div class="eb" style="left:33px;top:649px;"><div class="h"></div><div class="v"></div></div><div class="eb" style="left:33px;top:669px;"><div class="h"></div><div class="v"></div></div><div class="eb" style="left:33px;top:689px;"><div class="h"></div><div class="v"></div></div><div class="eb" style="left:33px;top:709px;"><div class="h"></div><div class="v"></div></div><div class="eb" style="left:33px;top:729px;"><div class="h"></div><div class="v"></div></div><div class="eb" style="left:33px;top:749px;"><div class="h"></div><div class="v"></div></div><div class="eb" style="left:33px;top:769px;"><div class="h"></div><div class="v"></div></div><div style="left:5px;top:784px;width:1444px;height:36px;background:#aaaaaa;box-shadow:inset 0 1px 0 #6b6b6b;"></div><svg style="position:absolute;left:50px;top:328px" width="16" height="22" viewBox="0 0 16 22"><path d="M1 1 L1 17.5 L5.2 13.8 L8.4 19.6 L10.6 18.6 L8.3 13.4 L13.3 12.8 Z" fill="#fff" stroke="#000" stroke-width="1"/></svg>
</div>
<div id="dlg" style="left:510px;top:272px;width:526px;height:251px;background:#f0f0f0;">
<div style="left:0;top:0;width:526px;height:43px;background:#222933;"></div>
<div style="left:0;top:43px;width:1px;height:208px;background:#1a7fd3;"></div>
<div style="left:525px;top:43px;width:1px;height:208px;background:#1a7fd3;"></div>
<div style="left:0;top:250px;width:526px;height:1px;background:#1a7fd3;"></div>
<div class="t" style="left:12px;top:16px;font-size:13.2px;color:#fff;">Modification d'assemblage</div>
<svg style="position:absolute;left:496px;top:15px" width="12" height="12" viewBox="0 0 12 12"><path d="M1 1 L11 11 M11 1 L1 11" stroke="#777c83" stroke-width="1.1"/></svg>
<svg style="position:absolute;left:33px;top:60px" width="32" height="32" viewBox="0 0 32 32">
<defs><radialGradient id="qg" cx="35%" cy="30%" r="75%"><stop offset="0" stop-color="#5c8ae6"/><stop offset="0.55" stop-color="#2448b8"/><stop offset="1" stop-color="#1a3aa0"/></radialGradient></defs>
<circle cx="16" cy="16" r="15.5" fill="#fff" stroke="#7a7a7a" stroke-width="1"/>
<circle cx="16" cy="16" r="13.6" fill="url(#qg)" stroke="#2a3f8a" stroke-width="0.6"/>
<path d="M12.4 11.8 C12.4 9.2 14.2 8.2 16.5 8.2 C18.7 8.2 19.9 9.6 19.9 11.3 C19.9 13.1 18.3 14.2 17.3 15 C16.5 15.7 16.3 16.4 16.3 18.6" fill="none" stroke="#f4f4f4" stroke-width="3.1"/>
<ellipse cx="15.9" cy="24.4" rx="2.4" ry="2.1" fill="#d8d8d8"/>
</svg>
<div class="t" style="left:-31px;width:600px;text-align:center;top:67px;font-size:13.8px;line-height:15px;color:#3a3a3a;transform:scaleX(0.93);">Vous voulez effectuer une modification permanente de l'item
Ossature de bois ...</div>
<div style="left:33px;top:121px;width:453px;height:77px;border:1px solid #a9a9a9;"></div>
<div class="btn" style="left:53px;top:135px;width:414px;height:21px;border:1px solid #333;"><div style="left:1px;top:1px;width:410px;height:17px;border:1px dotted #4a4a4a;"></div><div class="t bt" style="transform:scaleX(0.955);">À CET ENDROIT uniquement</div></div>
<div class="btn" style="left:53px;top:168px;width:414px;height:21px;"><div class="t bt">Partout au Catalogue et à ce Projet</div></div>
<div class="btn" style="left:261px;top:211px;width:206px;height:21px;"><div class="t bt">Annuler</div></div>
<div class="circ" style="left:15px;top:127.5px;">2</div>
<div class="circ" style="left:15px;top:169.5px;">1</div>
</div>
</body></html>
